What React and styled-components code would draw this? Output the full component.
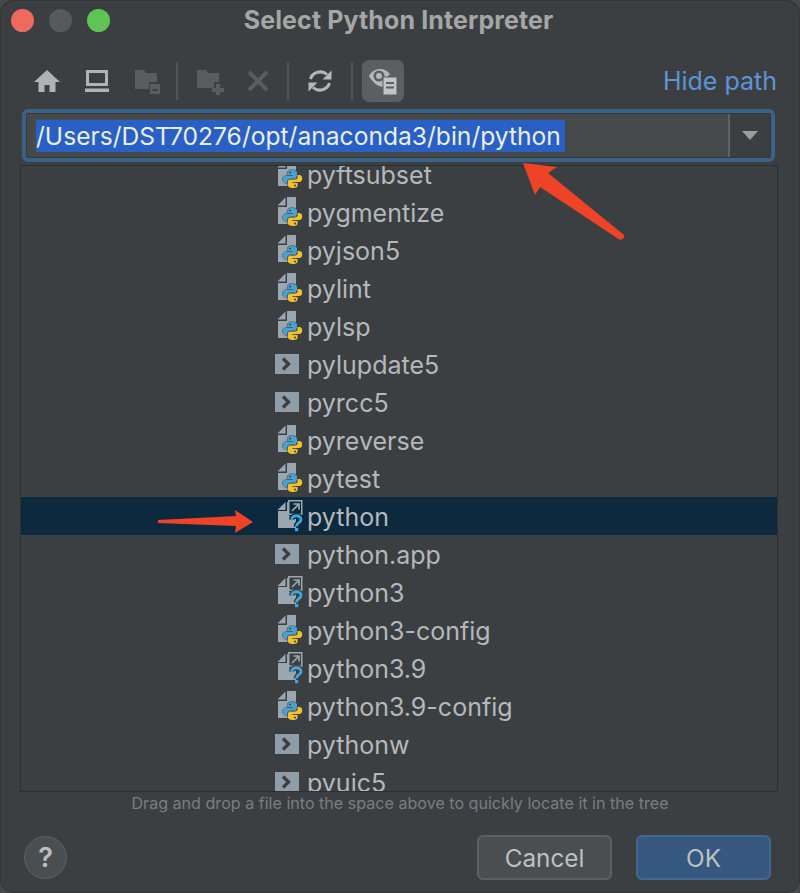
import React from "react";
import styled, { createGlobalStyle } from "styled-components";

const Global = createGlobalStyle`
  html, body { margin: 0; padding: 0; background: #46494a; }
  body { width: 800px; height: 893px; overflow: hidden; font-family: Inter, "Liberation Sans", sans-serif; }
`;

const Window = styled.div`
  position: relative;
  width: 800px;
  height: 893px;
  box-sizing: border-box;
  background: #3c3f41;
  border-radius: 14px;
  box-shadow: inset 0 0 0 1px #333537;
  display: flex;
  flex-direction: column;
  overflow: hidden;
`;

const TitleBar = styled.div`
  position: relative;
  height: 40px;
  display: flex;
  align-items: center;
  justify-content: center;
  flex: none;
`;

const Lights = styled.div`
  position: absolute;
  left: 11px;
  top: 9px;
  display: flex;
  gap: 15px;
`;

const Light = styled.span`
  width: 23px;
  height: 23px;
  border-radius: 50%;
  background: ${(p) => p.$color};
`;

const Title = styled.div`
  font-size: 25px;
  font-weight: 700;
  color: #a6a6a6;
  letter-spacing: 0.1px;
  margin-right: 3px;
`;

const ToolRow = styled.div`
  display: flex;
  align-items: center;
  height: 42px;
  margin-top: 20px;
  padding: 0 22px;
  flex: none;
`;

const ToolIcon = styled.div`
  width: ${(p) => p.$w || 50}px;
  height: 42px;
  display: flex;
  align-items: center;
  justify-content: center;
  flex: none;
`;

const Sep = styled.div`
  width: 2px;
  height: 38px;
  background: #515456;
  flex: none;
  margin: 0 ${(p) => p.$mr || 7}px 0 ${(p) => p.$ml || 5}px;
`;

const ToggleBtn = styled.div`
  width: 42px;
  height: 42px;
  border-radius: 7px;
  background: #5b5f62;
  display: flex;
  align-items: center;
  justify-content: center;
  flex: none;
`;

const HideLink = styled.div`
  margin-left: auto;
  margin-right: 1px;
  font-size: 25px;
  color: #5c94d6;
`;

const Field = styled.div`
  margin: 7px 0 0 22px;
  width: 753px;
  height: 53px;
  box-sizing: border-box;
  border: 4px solid #3d6185;
  border-radius: 6px;
  background: #45494a;
  display: flex;
  align-items: stretch;
  flex: none;
  outline: 1px solid #33383c;
  outline-offset: -5px;
`;

const FieldText = styled.div`
  flex: 1;
  padding-left: 10px;
  display: flex;
  align-items: center;
`;

const Selected = styled.span`
  background: #2a5fc4;
  color: #e8eef8;
  font-size: 24.6px;
  line-height: 32px;
  padding-right: 4px;
  white-space: nowrap;
`;

const DropBtn = styled.div`
  width: 39px;
  border-left: 2px solid #5e6162;
  background: #3c3f41;
  display: flex;
  align-items: center;
  justify-content: center;
  padding-right: 2px;
  border-radius: 0 3px 3px 0;
`;

const Caret = styled.div`
  width: 0;
  height: 0;
  border-left: 8px solid transparent;
  border-right: 8px solid transparent;
  border-top: 9px solid #9a9c9d;
`;

const Tree = styled.div`
  margin: 3px 0 0 20px;
  width: 758px;
  height: 627px;
  box-sizing: border-box;
  border: 1px solid #2d2f30;
  overflow: hidden;
  flex: none;
`;

const RowList = styled.div`
  margin-top: -11px;
`;

const Row = styled.div`
  height: 38px;
  display: flex;
  align-items: center;
  padding-left: 254px;
  background: ${(p) => (p.$selected ? "#0d293e" : "transparent")};
`;

const IconSlot = styled.div`
  width: 32px;
  height: 38px;
  box-sizing: border-box;
  padding-left: ${(p) => p.$inset}px;
  display: flex;
  align-items: center;
  flex: none;
`;

const RowName = styled.span`
  font-size: 25px;
  color: #b5b8ba;
  white-space: nowrap;
  padding-top: 2px;
`;

const Hint = styled.div`
  text-align: center;
  font-size: 16.1px;
  color: #7a7d7f;
  margin-top: 1px;
  line-height: 20px;
  flex: none;
`;

const Footer = styled.div`
  display: flex;
  align-items: center;
  margin-top: 22px;
  padding: 0 29px 0 24px;
  flex: none;
`;

const Help = styled.div`
  width: 43px;
  height: 43px;
  box-sizing: border-box;
  border-radius: 50%;
  border: 1px solid #5d6163;
  background: #4a4e50;
  color: #bbbdbe;
  font-size: 27px;
  font-weight: 600;
  display: flex;
  align-items: center;
  justify-content: center;
`;

const Button = styled.div`
  width: 135px;
  height: 45px;
  box-sizing: border-box;
  border-radius: 6px;
  display: flex;
  align-items: center;
  justify-content: center;
  font-size: 24.3px;
  color: #bcc0c2;
  background: ${(p) => (p.$primary ? "#365880" : "#4a4e50")};
  border: 2px solid ${(p) => (p.$primary ? "#43688f" : "#5c6062")};
  margin-left: ${(p) => p.$ml || 0}px;
`;

const Annotations = styled.svg`
  position: absolute;
  inset: 0;
  pointer-events: none;
`;

const Home = () => (
  <svg width="28" height="24" viewBox="0 0 28 24"><path d="M14 1 L27 13 H22.5 V23 H16.5 V16 H11.5 V23 H5.5 V13 H1 Z" fill="#b0b2b3" /></svg>
);
const Monitor = () => (
  <svg width="26" height="24" viewBox="0 0 26 24"><path fillRule="evenodd" d="M2 1 H24 V17 H2 Z M5 4 V14 H21 V4 Z" fill="#b0b2b3" /><rect x="1" y="19.5" width="24" height="3.5" fill="#b0b2b3" /></svg>
);
const FolderDoc = () => (
  <svg width="26" height="26" viewBox="0 0 26 26"><path d="M1 2 H10 L12 5 H23 V14 H15 V21 H1 Z" fill="#5a5d5f" /><path fillRule="evenodd" d="M16 16 H26 V26 H16 Z M18.5 21 V23 H23.5 V21 Z" fill="#5a5d5f" /></svg>
);
const FolderPlus = () => (
  <svg width="30" height="28" viewBox="0 0 30 28"><path d="M2 3 H11 L13 6 H24 V15 H19 V21 H2 Z" fill="#5a5d5f" /><path d="M21 17 H25 V21 H29 V25 H25 V28 H21 V25 H17 V21 H21 Z" fill="#5a5d5f" /></svg>
);
const Cross = () => (
  <svg width="22" height="22" viewBox="0 0 22 22"><path d="M2 2 L20 20 M20 2 L2 20" stroke="#5a5d5f" strokeWidth="4" /></svg>
);
const Refresh = () => (
  <svg width="26" height="26" viewBox="0 0 26 26" fill="none">
    <path d="M3.5 11 A10 9.5 0 0 1 20 6.5" stroke="#b5b7b8" strokeWidth="3" />
    <path d="M24.5 2.5 V11.5 H15.5 Z" fill="#b5b7b8" />
    <path d="M22.5 15 A10 9.5 0 0 1 6 19.5" stroke="#b5b7b8" strokeWidth="3" />
    <path d="M1.5 23.5 V14.5 H10.5 Z" fill="#b5b7b8" />
  </svg>
);
const EyeDoc = () => (
  <svg width="30" height="28" viewBox="0 0 30 28" fill="none">
    <path d="M1 9 C5 1 16 -1 22 7 L15 14 L15 20 C9 19 4 15 1 9 Z" fill="#b5b7b8" />
    <circle cx="11" cy="9" r="5.5" fill="#5b5f62" />
    <circle cx="11" cy="9" r="3" fill="#b5b7b8" />
    <rect x="15" y="10" width="14" height="18" rx="0.5" fill="#c2c4c5" stroke="#5b5f62" strokeWidth="1" />
    <path d="M18 16 H26 M18 20.5 H26" stroke="#5b5f62" strokeWidth="2" />
  </svg>
);

const BLUE = "#46a3d2";
const YELLOW = "#f1c02c";
const DOC = "#9aa7b0";
const LOGO_HALF =
  "M15.3 11 C11 11 10.4 12.4 10.4 14 V16 H15.5 V17 H8.8 C6.8 17 5.8 18.6 5.8 20.5 C5.8 22.6 6.8 24 8.8 24 H10.4 V22 C10.4 20.4 12 19.2 13.5 19.2 H17.6 C19 19.2 20.1 18 20.1 16.6 V14 C20.1 12 18.4 11 15.3 11 Z";

const PyIcon = () => (
  <svg width="26" height="30" viewBox="0 0 26 30">
    <path d="M8.5 0.5 V8.5 H0.5 Z" fill={DOC} />
    <path d="M10 0 H19 V27 H1 V10 H10 Z" fill={DOC} />
    <path d={LOGO_HALF} fill={BLUE} stroke="#3c3f41" strokeWidth="1" paintOrder="stroke" />
    <path d={LOGO_HALF} fill={YELLOW} stroke="#3c3f41" strokeWidth="1" paintOrder="stroke" transform="rotate(180 15.5 20)" />
    <circle cx="13" cy="13.4" r="1" fill="#3c3f41" />
    <circle cx="18" cy="26.6" r="1" fill="#3c3f41" />
  </svg>
);

const ExecIcon = () => (
  <svg width="24" height="20" viewBox="0 0 24 20">
    <rect width="24" height="20" fill="#8e9da8" />
    <path d="M8 4.5 L13.5 10 L8 15.5" fill="none" stroke="#3c4044" strokeWidth="3.4" />
  </svg>
);

const AliasIcon = ({ bg }) => (
  <svg width="26" height="32" viewBox="0 0 26 32">
    <path d="M8.5 2 V10 H0.5 Z" fill={DOC} />
    <path d="M10 2 H12 V16 H19 V28 H1 V11 H10 Z" fill={DOC} />
    <rect x="11.75" y="0.75" width="13" height="13.5" fill={bg} stroke={DOC} strokeWidth="1.5" />
    <path d="M15 11 L21.5 4.5 M16.5 4 H22 V9.5" fill="none" stroke={DOC} strokeWidth="1.7" />
    <path d="M14.8 19.5 C14.8 14.5 24 14.5 24 19.5 C24 23 19.5 22.5 19.5 26.5" fill="none" stroke={bg} strokeWidth="5.5" />
    <path d="M14.8 19.5 C14.8 14.5 24 14.5 24 19.5 C24 23 19.5 22.5 19.5 26.5" fill="none" stroke="#3fa8da" strokeWidth="2.8" />
    <rect x="18" y="28" width="3.2" height="3.2" fill="#3fa8da" />
  </svg>
);

const ROWS = [
  ["pyftsubset", "py"],
  ["pygmentize", "py"],
  ["pyjson5", "py"],
  ["pylint", "py"],
  ["pylsp", "py"],
  ["pylupdate5", "exec"],
  ["pyrcc5", "exec"],
  ["pyreverse", "py"],
  ["pytest", "py"],
  ["python", "alias", true],
  ["python.app", "exec"],
  ["python3", "alias"],
  ["python3-config", "py"],
  ["python3.9", "alias"],
  ["python3.9-config", "py"],
  ["pythonw", "exec"],
  ["pyuic5", "exec"],
];

const rowIcon = (kind, selected) => {
  if (kind === "py") return <PyIcon />;
  if (kind === "exec") return <ExecIcon />;
  return <AliasIcon bg={selected ? "#0d293e" : "#3c3f41"} />;
};

export default function App() {
  return (
    <>
      <Global />
      <Window>
        <TitleBar>
          <Lights>
            <Light $color="#ee6a5f" />
            <Light $color="#58595b" />
            <Light $color="#5fc454" />
          </Lights>
          <Title>Select Python Interpreter</Title>
        </TitleBar>
        <ToolRow>
          <ToolIcon><Home /></ToolIcon>
          <ToolIcon><Monitor /></ToolIcon>
          <ToolIcon><FolderDoc /></ToolIcon>
          <Sep $ml={4} $mr={7} />
          <ToolIcon><FolderPlus /></ToolIcon>
          <ToolIcon $w={46}><Cross /></ToolIcon>
          <Sep $ml={6} $mr={6} />
          <ToolIcon><Refresh /></ToolIcon>
          <Sep $ml={6} $mr={9} />
          <ToggleBtn><EyeDoc /></ToggleBtn>
          <HideLink>Hide path</HideLink>
        </ToolRow>
        <Field>
          <FieldText><Selected>/Users/DST70276/opt/anaconda3/bin/python</Selected></FieldText>
          <DropBtn><Caret /></DropBtn>
        </Field>
        <Tree>
          <RowList>
            {ROWS.map(([name, kind, selected]) => (
              <Row key={name} $selected={selected}>
                <IconSlot $inset={kind === "exec" ? 0 : 2}>{rowIcon(kind, selected)}</IconSlot>
                <RowName>{name}</RowName>
              </Row>
            ))}
          </RowList>
        </Tree>
        <Hint>Drag and drop a file into the space above to quickly locate it in the tree</Hint>
        <Footer>
          <Help>?</Help>
          <Button $ml={410}>Cancel</Button>
          <Button $primary $ml={24}>OK</Button>
        </Footer>
        <Annotations width="800" height="893" viewBox="0 0 800 893">
          <path d="M523 163 L557 167 L548 173 L624 235 Q625 239 620 240 L540 187 L535 195 Z" fill="#ee4326" />
          <path d="M158 520 L236 516 L235 510 L253 522 L235 533 L236 526 L158 523 Z" fill="#ee4326" />
        </Annotations>
      </Window>
    </>
  );
}
